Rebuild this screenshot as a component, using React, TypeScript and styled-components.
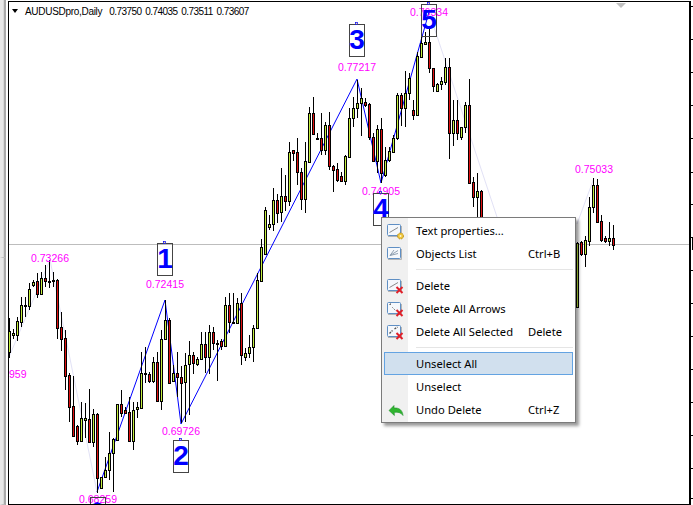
import styled, { createGlobalStyle } from "styled-components";
import type { ReactNode } from "react";

type Candle = [number, number, number, number, "g" | "r"];

// y values are in thirds of a pixel, read off a 3x crop
const lower: Candle[] = [
    [205, 325, 243, 307, "g"], [238, 268, 250, 254, "g"], [200, 272, 213, 255, "g"], [140, 230, 165, 215, "g"],
    [140, 200, 165, 168, "g"], [98, 180, 118, 167, "g"], [90, 110, 97, 104, "g"], [70, 145, 94, 131, "r"],
    [65, 135, 85, 131, "g"], [45, 110, 85, 94, "r"], [30, 115, 92, 95, "g"], [65, 110, 90, 94, "g"],
    [88, 268, 90, 233, "r"], [186, 302, 232, 266, "r"], [240, 420, 265, 377, "r"], [368, 515, 375, 470, "r"],
    [378, 558, 468, 557, "r"], [525, 585, 528, 572, "r"], [457, 575, 505, 572, "g"], [458, 565, 505, 509, "g"],
    [418, 580, 508, 575, "r"], [478, 590, 492, 575, "g"], [490, 728, 492, 685, "r"], [680, 717, 682, 715, "g"],
    [620, 685, 660, 682, "g"], [545, 690, 610, 660, "g"], [565, 725, 568, 610, "g"], [462, 570, 463, 570, "g"],
    [420, 500, 463, 488, "r"], [470, 490, 480, 488, "r"], [440, 575, 487, 572, "r"], [455, 600, 481, 572, "g"],
    [455, 505, 472, 478, "g"], [305, 475, 370, 473, "g"], [290, 400, 370, 373, "g"], [365, 398, 372, 392, "r"],
    [320, 400, 337, 392, "g"], [305, 455, 337, 452, "r"], [240, 480, 268, 452, "g"], [150, 270, 210, 268, "g"],
    [205, 400, 210, 398, "r"], [345, 395, 370, 392, "g"], [305, 440, 370, 382, "r"], [348, 520, 382, 398, "r"],
    [308, 515, 346, 397, "g"], [272, 495, 316, 343, "g"], [305, 372, 316, 340, "r"], [320, 347, 327, 343, "g"],
    [245, 330, 283, 327, "g"], [245, 370, 283, 322, "r"], [225, 372, 247, 322, "g"], [230, 300, 247, 280, "r"],
    [270, 392, 280, 283, "g"], [268, 300, 273, 287, "r"], [140, 290, 165, 287, "g"], [128, 248, 165, 217, "r"],
    [130, 222, 217, 220, "g"], [145, 222, 160, 220, "g"], [130, 345, 160, 315, "r"], [295, 332, 310, 320, "g"],
    [255, 325, 292, 310, "g"], [225, 335, 235, 292, "g"], [70, 235, 90, 235, "g"],
];

const upper: Candle[] = [
    [717, 845, 742, 842, "g"], [620, 765, 630, 762, "g"], [645, 690, 672, 680, "g"], [565, 692, 600, 672, "g"],
    [582, 670, 600, 638, "r"], [505, 665, 588, 635, "g"], [525, 632, 588, 602, "r"], [427, 618, 457, 602, "g"],
    [450, 482, 450, 458, "r"], [415, 555, 457, 517, "r"], [505, 630, 517, 597, "r"], [427, 640, 483, 597, "g"],
    [322, 485, 340, 485, "g"], [290, 405, 340, 403, "r"], [400, 418, 415, 417, "g"], [340, 465, 415, 450, "r"],
    [365, 465, 375, 450, "g"], [335, 510, 375, 497, "r"], [495, 575, 497, 510, "r"], [490, 545, 508, 540, "r"],
    [515, 545, 527, 543, "r"], [465, 555, 468, 542, "g"], [325, 470, 355, 470, "g"], [290, 380, 325, 355, "g"],
    [240, 355, 310, 325, "g"], [265, 408, 295, 310, "g"], [295, 320, 307, 315, "r"], [310, 420, 313, 410, "r"],
    [400, 480, 410, 483, "r"], [375, 520, 387, 483, "g"], [355, 550, 387, 520, "r"], [440, 530, 480, 525, "g"],
    [440, 485, 453, 480, "g"], [405, 455, 415, 455, "g"], [280, 420, 285, 415, "g"], [280, 378, 285, 323, "r"],
    [212, 380, 280, 323, "g"], [220, 300, 235, 280, "g"], [300, 360, 330, 345, "r"], [155, 345, 168, 345, "g"],
    [105, 175, 130, 170, "g"], [95, 135, 125, 132, "g"], [85, 220, 127, 205, "r"], [205, 275, 205, 257, "r"],
    [250, 275, 252, 272, "g"], [230, 270, 243, 253, "g"], [175, 255, 200, 245, "g"], [175, 478, 202, 400, "r"],
    [300, 437, 360, 400, "g"], [300, 420, 360, 400, "r"], [380, 420, 380, 410, "g"], [305, 400, 315, 382, "g"],
    [238, 550, 315, 548, "r"], [530, 620, 547, 592, "r"], [520, 660, 573, 592, "g"], [570, 700, 573, 700, "r"],
];

const tail: Candle[] = [
    [725, 925, 730, 920, "g"], [722, 768, 727, 762, "r"], [708, 800, 720, 762, "g"], [590, 738, 622, 722, "g"],
    [533, 640, 555, 622, "g"], [537, 665, 555, 665, "r"], [645, 725, 664, 720, "r"], [708, 730, 715, 722, "r"],
    [665, 738, 715, 722, "g"], [675, 750, 715, 735, "r"],
];

const candles = [
    ...lower.map((c, i) => ({ c, i, base: 250 })),
    ...upper.map((c, i) => ({ c, i: i + 63, base: 0 })),
    ...tail.map((c, i) => ({ c, i: i + 142, base: 0 })),
];

const prices = [
    { text: "0.73266", x: 50, y: 262 },
    { text: "0.72415", x: 165, y: 288 },
    { text: "0.69726", x: 181, y: 435 },
    { text: "0.68259", x: 98, y: 503 },
    { text: "0.77217", x: 357, y: 71 },
    { text: "0.74905", x: 381, y: 195 },
    { text: "0.76334", x: 429, y: 16 },
    { text: "0.75033", x: 594, y: 173 },
];

const waves = [
    { text: "1", x: 157, y: 243, base: 268 },
    { text: "2", x: 173, y: 440, base: 465 },
    { text: "3", x: 349, y: 24, base: 49 },
    { text: "4", x: 373, y: 193, base: 218 },
    { text: "5", x: 421, y: 4, base: 29 },
];

const axisTicks = [6, 39, 72, 105, 138, 172, 204, 237, 270, 303, 336, 369, 402, 435, 468, 498];

const Global = createGlobalStyle`
    html, body {
        margin: 0;
        padding: 0;
        background: #fff;
    }
`;

const Window = styled.div`
    position: relative;
    display: flex;
    width: 693px;
    height: 505px;
    overflow: hidden;
    background: #fff;
    font-family: "Noto Sans", sans-serif;
`;

const LeftRail = styled.div`
    display: flex;
    flex-direction: column;
    width: 8px;
    flex: none;
    background: #fff;
`;

const RailPane = styled.div<{ $size: number }>`
    height: ${(p) => p.$size}px;
    border-right: 2px solid #a9a9a9;
    border-left: 3px solid #e8e8e8;
    border-bottom: 1px solid #bdbdbd;
    background: #d9d9d9;
    box-sizing: border-box;
    width: 6px;
`;

const ChartFrame = styled.div`
    position: relative;
    flex: 1;
    margin-top: 1px;
    height: 504px;
    box-sizing: border-box;
    border: 1px solid #000;
    border-right: 2px solid #000;
`;

const ChartSvg = styled.svg`
    display: block;
    width: 100%;
    height: 100%;
`;

const Legend = styled.div`
    position: absolute;
    top: 2px;
    left: 3px;
    display: flex;
    align-items: center;
    height: 14px;
    font-family: "Liberation Sans", sans-serif;
    font-size: 10px;
    letter-spacing: -0.3px;
    color: #000;
    white-space: pre;
`;

const LegendArrow = styled.span`
    width: 0;
    height: 0;
    margin-right: 7px;
    border-left: 3.5px solid transparent;
    border-right: 3.5px solid transparent;
    border-top: 4px solid #000;
`;

const LegendValues = styled.span`
    margin-left: 7px;
    font-size: 10px;
    letter-spacing: -0.55px;
    word-spacing: 1.5px;
`;

const ShiftMark = styled.span`
    position: absolute;
    top: 1px;
    left: 607px;
    width: 0;
    height: 0;
    border-left: 5px solid transparent;
    border-right: 5px solid transparent;
    border-top: 5px solid #c0c0c0;
`;

const RightAxis = styled.div`
    position: relative;
    width: 2px;
    flex: none;
`;

const AxisTick = styled.i`
    position: absolute;
    left: 0;
    width: 2px;
    height: 1px;
    background: #000;
`;

const AxisMark = styled.i`
    position: absolute;
    top: 238px;
    left: 1px;
    width: 1px;
    height: 12px;
    background: #000;
`;

const Menu = styled.div`
    position: absolute;
    left: 381px;
    top: 217px;
    width: 195px;
    box-sizing: border-box;
    padding: 1px 0;
    border: 1px solid #7b7b7b;
    background: linear-gradient(to right, #f0f0f0 26px, #fff 26px);
    box-shadow: 3px 3px 3px rgba(0, 0, 0, 0.4);
    font-size: 11.2px;
    color: #000;
`;

const Row = styled.div<{ $active?: boolean }>`
    display: grid;
    grid-template-columns: 31px 112px 1fr;
    align-items: center;
    height: 23px;
    margin: 0 2px;
    box-sizing: border-box;
    border: 1px solid ${(p) => (p.$active ? "#63a3e2" : "transparent")};
    background: ${(p) => (p.$active ? "#d1e0ee" : "transparent")};
`;

const IconCell = styled.span`
    display: flex;
    padding-left: 1px;
`;

const Label = styled.span`
    white-space: nowrap;
`;

const Separator = styled.div`
    height: 1px;
    margin: 4px 2px 4px 34px;
    background: #e5e5e5;
`;

const windowIcon = (inner: ReactNode, badge?: "gear" | "cross") => (
    <svg width="18" height="18" viewBox="0 0 18 18">
        <rect x="1.5" y="2.5" width="13" height="11" rx="1" fill="#f5f8fc" stroke="#5f8fc4" />
        <path d="M2 14.5h13.5V4" fill="none" stroke="#b5b5b5" />
        {inner}
        {badge === "gear" && (
            <g>
                <circle cx="14.5" cy="14" r="3" fill="#eec53c" stroke="#b58d1a" strokeDasharray="1.5 1" />
                <circle cx="14.5" cy="14" r="1" fill="#fff6cf" />
            </g>
        )}
        {badge === "cross" && <path d="M10.5 10l6 6M16.5 10l-6 6" stroke="#e0202a" strokeWidth="2" />}
    </svg>
);

const undoIcon = (
    <svg width="18" height="18" viewBox="0 0 18 18">
        <path
            d="M3 9.5 L8 4.5 V7 C13 6.6 16.5 9 17 14.5 C15 11.6 12 10.8 8.2 11.4 L8.4 14.5 Z"
            fill="#2fb52f"
            stroke="#1f8f2a"
            strokeWidth="0.6"
        />
    </svg>
);

const icons = {
    text: windowIcon(<path d="M3.5 10.5 L12 5.5" stroke="#8a8a8a" />, "gear"),
    list: windowIcon(<path d="M4 10.5 L12 5.5M4 10.5 L12 8.5M4 10.5 L8 5" stroke="#8f9fb0" fill="none" />),
    remove: windowIcon(<path d="M3.5 10.5 L12 5.5" stroke="#8a8a8a" />, "cross"),
    arrows: windowIcon(<path d="M3.5 4.5h2M4.5 3.5v2M6.5 7.5 L9.5 10.5" stroke="#444" strokeDasharray="1 1" fill="none" />, "cross"),
    selected: windowIcon(<path d="M3.5 10.5 L6.5 7.5M8.5 6 L11.5 4" stroke="#555" strokeWidth="1.4" strokeDasharray="2 1" fill="none" />, "cross"),
    undo: undoIcon,
};

const MenuRow = ({ label, shortcut, icon, active }: { label: string; shortcut?: string; icon?: keyof typeof icons; active?: boolean }) => (
    <Row $active={active}>
        <IconCell>{icon && icons[icon]}</IconCell>
        <Label>{label}</Label>
        {shortcut && <Label>{shortcut}</Label>}
    </Row>
);

const Chart = () => (
    <ChartSvg viewBox="9 2 680 502" preserveAspectRatio="none">
        <line x1="9" y1="244.5" x2="690" y2="244.5" stroke="#bdbdbd" />
        <polyline points="9,357 50,260 97,492" fill="none" stroke="#e2e2f6" />
        <polyline points="429,12 497,217 540,340" fill="none" stroke="#e2e2f6" />
        <polyline points="577,224 594,178" fill="none" stroke="#e2e2f6" />
        <polyline points="97,492 165,300 181,424 357,79 381,183 429,12" fill="none" stroke="#0000ff" />
        {candles.map(({ c, i, base }) => {
            const x = Math.floor(9.33 + 4 * i);
            const [wt, wb, bt, bb, kind] = c;
            const top = Math.round(base + bt / 3);
            const bottom = Math.max(Math.round(base + bb / 3), top + 1);
            return (
                <g key={i} shapeRendering="crispEdges">
                    <line x1={x + 0.5} x2={x + 0.5} y1={base + wt / 3} y2={base + wb / 3} stroke="#000" />
                    <rect x={x - 0.5} y={top + 0.5} width={2} height={bottom - top} fill={kind === "g" ? "#c4ee3e" : "#e01010"} stroke="#000" />
                </g>
            );
        })}
        {prices.map((p) => (
            <text key={p.text} x={p.x} y={p.y} textAnchor="middle" fontFamily="Liberation Sans" fontSize="10.5" fill="#ff00ff">
                {p.text}
            </text>
        ))}
        <text x="9" y="378" fontFamily="Liberation Sans" fontSize="10.5" fill="#ff00ff">959</text>
        {waves.map((w) => (
            <g key={w.text}>
                <rect x={w.x + 0.5} y={w.y + 0.5} width="15" height="32" fill="none" stroke="#444" shapeRendering="crispEdges" />
                <rect x={w.x + 6.5} y={w.y - 1.5} width="2" height="2" fill="#ffe680" stroke="#0000ff" strokeWidth="0.7" />
                <text x={w.x + 8} y={w.base} textAnchor="middle" fontFamily="Liberation Sans" fontSize="28" fontWeight="700" fill="#0000ff">
                    {w.text}
                </text>
            </g>
        ))}
        <rect x="90.5" y="497.5" width="15" height="12" fill="none" stroke="#444" shapeRendering="crispEdges" />
        <path d="M93 504h9l-4.5 -2z" fill="#0000ff" />
    </ChartSvg>
);

const App = () => (
    <Window>
        <Global />
        <LeftRail>
            <RailPane $size={258} />
            <RailPane $size={247} />
        </LeftRail>
        <ChartFrame>
            <Chart />
            <Legend>
                <LegendArrow />
                <span>AUDUSDpro,Daily</span>
                <LegendValues>0.73750 0.74035 0.73511 0.73607</LegendValues>
            </Legend>
            <ShiftMark />
        </ChartFrame>
        <RightAxis>
            {axisTicks.map((y) => (
                <AxisTick key={y} style={{ top: y }} />
            ))}
            <AxisMark />
        </RightAxis>
        <Menu>
            <MenuRow icon="text" label="Text properties..." />
            <MenuRow icon="list" label="Objects List" shortcut="Ctrl+B" />
            <Separator />
            <MenuRow icon="remove" label="Delete" />
            <MenuRow icon="arrows" label="Delete All Arrows" />
            <MenuRow icon="selected" label="Delete All Selected" shortcut="Delete" />
            <Separator />
            <MenuRow active label="Unselect All" />
            <MenuRow label="Unselect" />
            <MenuRow icon="undo" label="Undo Delete" shortcut="Ctrl+Z" />
        </Menu>
    </Window>
);

export default App;
